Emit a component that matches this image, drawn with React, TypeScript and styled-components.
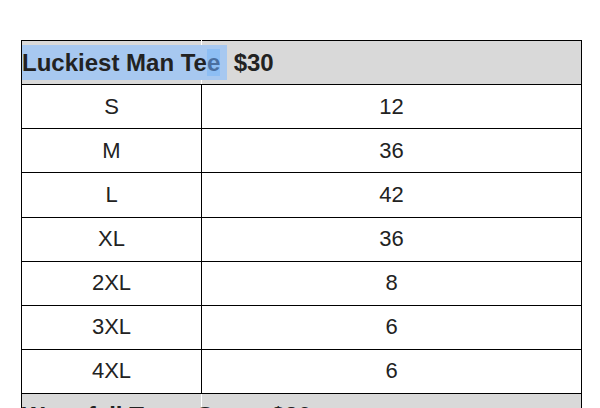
import React from "react";
import styled, { createGlobalStyle } from "styled-components";

const Global = createGlobalStyle`
  html, body { margin: 0; padding: 0; background: #fff; }
  body { font-family: "Liberation Sans", Arial, sans-serif; color: #222; overflow: hidden; }
`;

const Page = styled.div`
  padding: 40px 0 0 21px;
  height: 408px;
  box-sizing: border-box;
  overflow: hidden;
`;

const Table = styled.table`
  border-collapse: collapse;
  table-layout: fixed;
  width: 560px;
`;

const Row = styled.tr`
  height: 44.125px;
`;

const Cell = styled.td`
  border: 1px solid #000;
  padding: 0;
  text-align: center;
  vertical-align: middle;
  font-size: 22px;
  color: #222;
`;

const HeadCell = styled.td<{ $first?: boolean }>`
  border: 1px solid #000;
  ${(p) => (p.$first ? "border-right: 1px solid #fff;" : "border-left: 1px solid #fff;")}
  background: #d9d9d9;
  padding: 0;
  font-size: 24px;
  font-weight: 700;
  color: #222;
  white-space: nowrap;
  overflow: visible;
  text-align: left;
  vertical-align: middle;
`;

const Selected = styled.span`
  background: #a7c8f0;
  padding: 4px 0;
`;

const Caret = styled.span`
  background: #8dbef4;
  color: #4a6fa0;
`;

type Item = { size: string; qty: number };

const tee: Item[] = [
  { size: "S", qty: 12 },
  { size: "M", qty: 36 },
  { size: "L", qty: 42 },
  { size: "XL", qty: 36 },
  { size: "2XL", qty: 8 },
  { size: "3XL", qty: 6 },
  { size: "4XL", qty: 6 },
];

export default function App() {
  return (
    <>
      <Global />
      <Page>
        <Table>
          <colgroup>
            <col style={{ width: 180 }} />
            <col style={{ width: 380 }} />
          </colgroup>
          <tbody>
            <Row>
              <HeadCell $first>
                <Selected>
                  Luckiest Man Te<Caret>e</Caret>{" "}
                </Selected>
                {"\u00a0"}$30
              </HeadCell>
              <HeadCell />
            </Row>
            {tee.map((t) => (
              <Row key={t.size}>
                <Cell>{t.size}</Cell>
                <Cell>{t.qty}</Cell>
              </Row>
            ))}
            <Row>
              <HeadCell $first>Waterfall Tee – Green $30</HeadCell>
              <HeadCell />
            </Row>
          </tbody>
        </Table>
      </Page>
    </>
  );
}
